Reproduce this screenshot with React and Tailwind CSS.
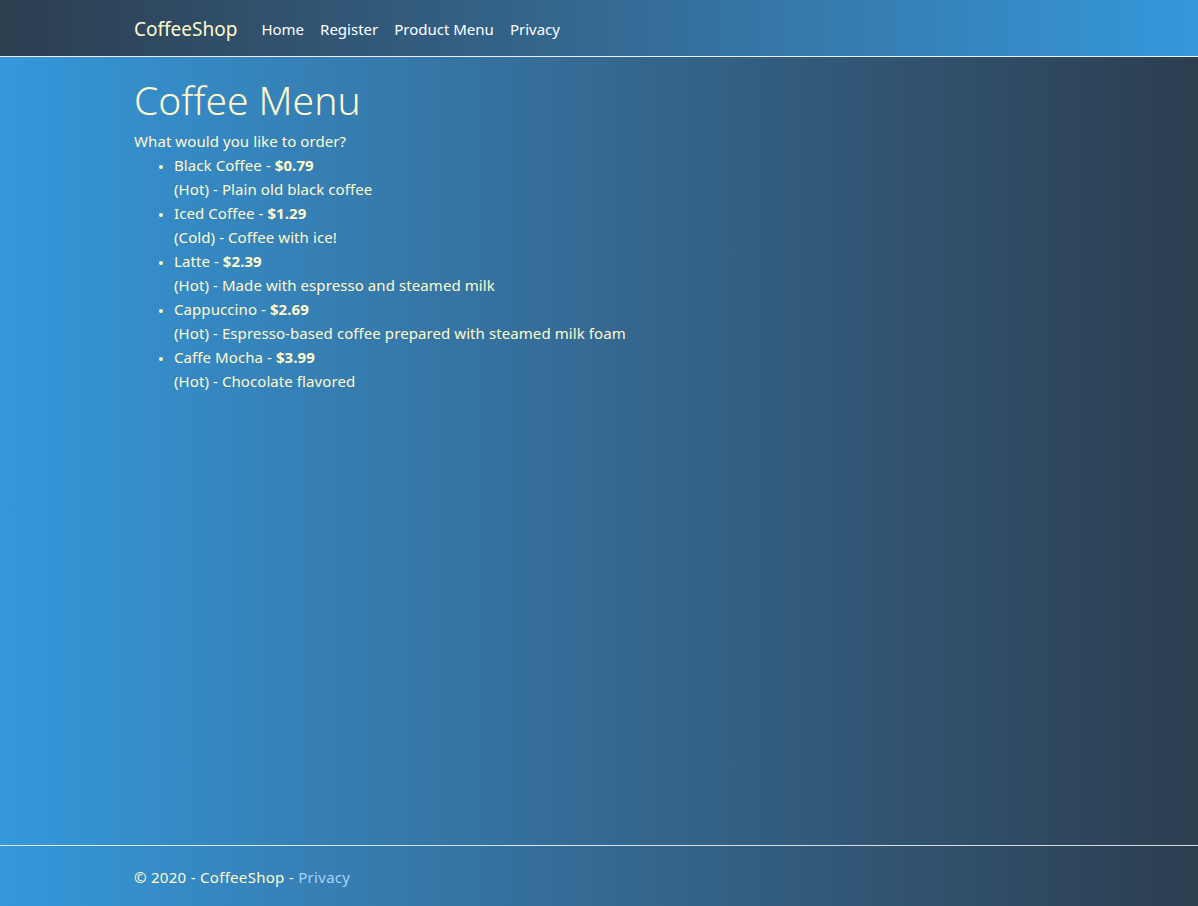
import React from 'react'

const items = [
  { name: 'Black Coffee', price: '$0.79', temp: 'Hot', desc: 'Plain old black coffee' },
  { name: 'Iced Coffee', price: '$1.29', temp: 'Cold', desc: 'Coffee with ice!' },
  { name: 'Latte', price: '$2.39', temp: 'Hot', desc: 'Made with espresso and steamed milk' },
  { name: 'Cappuccino', price: '$2.69', temp: 'Hot', desc: 'Espresso-based coffee prepared with steamed milk foam' },
  { name: 'Caffe Mocha', price: '$3.99', temp: 'Hot', desc: 'Chocolate flavored' },
]

const App = () => {
  return (
    <div
      className="flex flex-col min-h-screen bg-gradient-to-r from-[#3498db] to-[#2c3e50] text-[#fffacd] text-[15px] leading-6"
      style={{ fontFamily: '"Noto Sans", "Open Sans", sans-serif' }}
    >
      <header className="h-[57px] border-b border-white/90 bg-gradient-to-r from-[#2c3e50] to-[#3498db] mb-4">
        <nav className="w-[960px] mx-auto px-[15px] pt-[2px] h-full flex items-center">
          <span className="text-[19px] leading-[30px] mr-4">CoffeeShop</span>
          <ul className="flex text-white">
            <li className="px-2">Home</li>
            <li className="px-2">Register</li>
            <li className="px-2">Product Menu</li>
            <li className="px-2">Privacy</li>
          </ul>
        </nav>
      </header>

      <main className="flex-1 w-[960px] mx-auto px-[15px] pb-4">
        <h1 className="text-[39px] leading-[48px] font-light pt-[3px] mb-[5px]">Coffee Menu</h1>
        <div className="tracking-[0.08px]">
          <p>What would you like to order?</p>
          <ul className="list-disc pl-10 marker:text-[12px]">
            {items.map((it) => (
              <li key={it.name}>
                {it.name} - <b className="font-bold">{it.price}</b>
                <br />
                ({it.temp}) - {it.desc}
              </li>
            ))}
          </ul>
        </div>
      </main>

      <footer className="h-[61px] border-t border-white/80 leading-[60px] pt-[1px] tracking-[0.3px]">
        <div className="w-[960px] mx-auto px-[15px]">
          © 2020 - CoffeeShop - <a className="text-[#a8d4f5]">Privacy</a>
        </div>
      </footer>
    </div>
  )
}

export default App
